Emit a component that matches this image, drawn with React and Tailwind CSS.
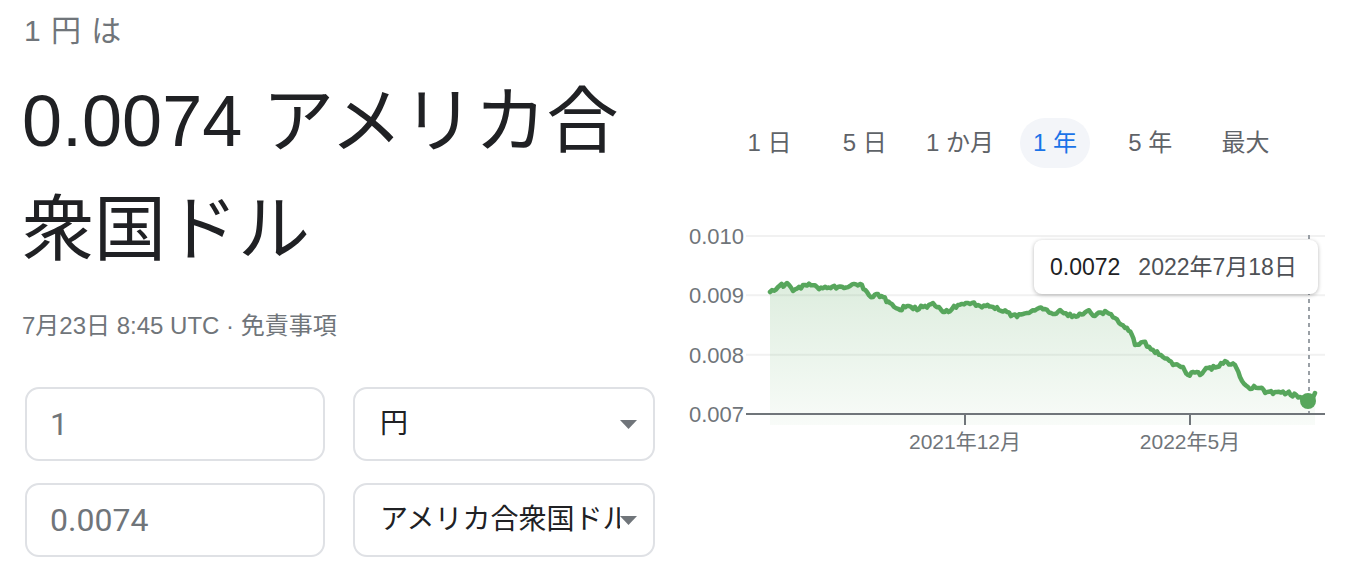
import React from "react";

const KEY = [
  [770, 292], [778, 287], [787, 283], [793, 291], [805, 285], [817, 287], [827, 288], [838, 287],
  [850, 286], [860, 284], [867, 292], [873, 297], [878, 294], [883, 297], [890, 303], [900, 310],
  [907, 306], [913, 309], [923, 307], [933, 303], [943, 312], [952, 309], [958, 305], [968, 303],
  [980, 306], [993, 307], [1007, 312], [1017, 317], [1027, 313], [1037, 309], [1045, 309],
  [1053, 314], [1060, 310], [1072, 317], [1087, 311], [1095, 316], [1105, 311], [1115, 318],
  [1125, 328], [1132, 335], [1135, 345], [1143, 342], [1153, 350], [1163, 357], [1173, 365],
  [1183, 367], [1188, 375], [1193, 372], [1200, 375], [1208, 368], [1217, 367], [1227, 362],
  [1235, 365], [1240, 377], [1248, 387], [1258, 388], [1267, 392], [1277, 392], [1287, 393],
  [1300, 397], [1308, 402], [1315, 393],
];

function noise(i) {
  const v = Math.sin(i * 12.9898 + 4.1) * 43758.5453;
  return (v - Math.floor(v)) * 2 - 1;
}

function buildPoints() {
  const pts = [];
  let k = 0;
  for (let s = 0; s < KEY.length - 1; s++) {
    const [x0, y0] = KEY[s];
    const [x1, y1] = KEY[s + 1];
    const steps = Math.max(1, Math.round((x1 - x0) / 2));
    for (let j = 0; j < steps; j++) {
      const t = j / steps;
      const x = x0 + (x1 - x0) * t;
      let y = y0 + (y1 - y0) * t;
      if (j !== 0) y += noise(k) * 2.1;
      pts.push([x - 680, y - 220]);
      k++;
    }
  }
  const last = KEY[KEY.length - 1];
  pts.push([last[0] - 680, last[1] - 220]);
  return pts;
}

const PTS = buildPoints();
const LINE = PTS.map(([x, y]) => `${x.toFixed(1)},${y.toFixed(1)}`).join(" ");
const AREA =
  `M${PTS[0][0]},205 ` +
  PTS.map(([x, y]) => `L${x.toFixed(1)},${y.toFixed(1)}`).join(" ") +
  ` L${PTS[PTS.length - 1][0]},205 Z`;

const FONT = "font-['Liberation_Sans','Noto_Sans_CJK_JP',sans-serif]";

function Arrow() {
  return (
    <svg width="17" height="9" viewBox="0 0 17 9" className="shrink-0">
      <polygon points="0,0 17,0 8.5,9" fill="#70757a" />
    </svg>
  );
}

function Chart() {
  const grid = [236, 295.3, 354.7].map((y) => y - 220);
  const labels = [
    ["0.010", 16],
    ["0.009", 75.3],
    ["0.008", 134.7],
    ["0.007", 194],
  ];
  return (
    <svg width="668" height="240" viewBox="0 0 668 240" className="block">
      <defs>
        <linearGradient id="g" x1="0" y1="0" x2="0" y2="1">
          <stop offset="0%" stopColor="#57a65c" stopOpacity="0.2" />
          <stop offset="100%" stopColor="#57a65c" stopOpacity="0.04" />
        </linearGradient>
      </defs>
      {grid.map((y) => (
        <line key={y} x1="66" x2="645" y1={y} y2={y} stroke="#f1f1f1" strokeWidth="2" />
      ))}
      {labels.map(([t, y]) => (
        <text
          key={t}
          x="64"
          y={y}
          dy="8"
          textAnchor="end"
          fontSize="22"
          fill="#70757a"
          fontFamily="Liberation Sans, sans-serif"
        >
          {t}
        </text>
      ))}
      <path d={AREA} fill="url(#g)" />
      <line x1="629" x2="629" y1="15" y2="194" stroke="#9aa0a6" strokeWidth="2" strokeDasharray="4 4" />
      <polyline points={LINE} fill="none" stroke="#57a65c" strokeWidth="4.5" strokeLinejoin="round" strokeLinecap="round" />
      <line x1="66" x2="645" y1="194" y2="194" stroke="#70757a" strokeWidth="2" />
      <line x1="285" x2="285" y1="194" y2="205" stroke="#70757a" strokeWidth="2" />
      <line x1="510" x2="510" y1="194" y2="205" stroke="#70757a" strokeWidth="2" />
      <circle cx="628" cy="181" r="8" fill="#57a65c" />
      <text x="285" y="229" textAnchor="middle" fontSize="21" fill="#70757a" fontFamily="Liberation Sans, Noto Sans CJK JP, sans-serif">
        2021年12月
      </text>
      <text x="510" y="229" textAnchor="middle" fontSize="21" fill="#70757a" fontFamily="Liberation Sans, Noto Sans CJK JP, sans-serif">
        2022年5月
      </text>
    </svg>
  );
}

export default function App() {
  const tabs = ["1 日", "5 日", "1 か月", "1 年", "5 年", "最大"];
  return (
    <div className={`${FONT} flex w-[1348px] h-[574px] overflow-hidden bg-white pl-[22px]`}>
      {/* Left column */}
      <div className="w-[658px] shrink-0">
        <div className="pt-[11px] pl-[2px] text-[30px] leading-[40px] tracking-[1px] text-[#70757a]">1 円 は</div>
        <div className="mt-[16px] text-[72px] leading-[108px] text-[#202124]">
          0.0074 アメリカ合衆国ドル
        </div>
        <div className="mt-[27px] text-[24px] leading-[32px] text-[#70757a]">
          7月23日 8:45 UTC · 免責事項
        </div>
        <div className="mt-[45px] ml-[3px] grid grid-cols-[300px_302px] gap-x-[28px] gap-y-[22px]">
          <div className="h-[74px] rounded-[14px] border-2 border-[#dfe1e5] flex items-center pl-[23px] font-['Roboto',sans-serif] text-[32px] text-[#70757a]">
            1
          </div>
          <div className="h-[74px] rounded-[14px] border-2 border-[#dfe1e5] flex items-center pl-[25px] pr-[16px] text-[28px] text-[#202124]">
            <span className="flex-1 overflow-hidden whitespace-nowrap">円</span>
            <Arrow />
          </div>
          <div className="h-[74px] rounded-[14px] border-2 border-[#dfe1e5] flex items-center pl-[23px] font-['Roboto',sans-serif] text-[32px] text-[#70757a]">
            0.0074
          </div>
          <div className="h-[74px] rounded-[14px] border-2 border-[#dfe1e5] flex items-center pl-[25px] pr-[16px] text-[28px] text-[#202124]">
            <span className="flex-1 overflow-hidden whitespace-nowrap">アメリカ合衆国ドル</span>
            <Arrow />
          </div>
        </div>
      </div>

      {/* Right column */}
      <div className="relative flex-1">
        <div className="mt-[118px] ml-[42px] grid w-[571px] grid-cols-6">
          {tabs.map((t, i) => (
            <div key={t} className="flex h-[50px] items-center justify-center">
              {i === 3 ? (
                <span className="flex h-[50px] items-center rounded-full bg-[#f3f5f9] px-[13px] text-[24px] text-[#1a73e8]">
                  {t}
                </span>
              ) : (
                <span className="text-[24px] text-[#5f6368]">{t}</span>
              )}
            </div>
          ))}
        </div>
        <div className="mt-[52px]">
          <Chart />
        </div>
        <div className="absolute left-[354px] top-[240px] flex h-[54px] w-[284px] items-center gap-[18px] rounded-[8px] bg-white pl-[16px] shadow-[0_1px_4px_rgba(0,0,0,0.28)] text-[23px]">
          <span className="text-[#202124]">0.0072</span>
          <span className="text-[#4d5156]">2022年7月18日</span>
        </div>
      </div>
    </div>
  );
}
